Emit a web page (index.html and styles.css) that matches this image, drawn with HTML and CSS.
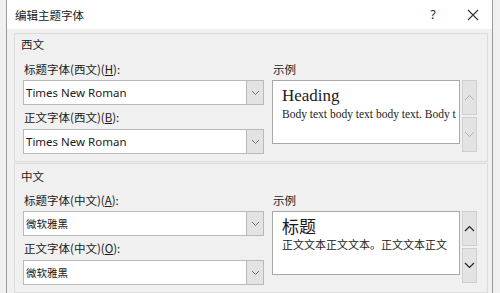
FILE: index.html
```html
<!DOCTYPE html>
<html lang="zh">
  <head>
    <meta charset="UTF-8" />
    <meta name="viewport" content="width=device-width, initial-scale=1.0" />
    <title>编辑主题字体</title>
    <link rel="stylesheet" href="styles.css">
  </head>
  <body>
    <div class="dialog">
      <div class="titleBar">
        <span class="title">编辑主题字体</span>
        <span class="help">?</span>
        <span class="close">
          <svg width="12" height="12" viewBox="0 0 12 12">
            <path d="M1 1 L11 11 M11 1 L1 11" stroke="#333" stroke-width="1.1" fill="none" />
          </svg>
        </span>
      </div>
      <div class="content">
        <div class="group">
          <div class="groupHead">西文</div>
          <div class="groupBody">
            <div class="fields">
              <div class="label">标题字体(西文)(<u>H</u>):</div>
              <div class="combo">
                <div class="comboText latin">Times New Roman</div>
                <div class="comboDrop">
                  <svg width="9" height="6" viewBox="0 0 9 6"><path d="M1 1 L4.5 4.5 L8 1" stroke="#707070" fill="none" /></svg>
                </div>
              </div>
              <div class="label gapTop">正文字体(西文)(<u>B</u>):</div>
              <div class="combo">
                <div class="comboText latin">Times New Roman</div>
                <div class="comboDrop">
                  <svg width="9" height="6" viewBox="0 0 9 6"><path d="M1 1 L4.5 4.5 L8 1" stroke="#707070" fill="none" /></svg>
                </div>
              </div>
            </div>
            <div class="sample">
              <div class="label">示例</div>
              <div class="sampleRow">
                <div class="preview">
                  <div class="headLatin">Heading</div>
                  <div class="bodyLatin">Body text body text body text. Body t</div>
                </div>
                <div class="scroller">
                  <div class="scrollBtn">
                    <svg width="11" height="7" viewBox="0 0 11 7"><path d="M1 6 L5.5 1.5 L10 6" stroke="#b0b0b0" fill="none" /></svg>
                  </div>
                  <div class="scrollBtn">
                    <svg width="11" height="7" viewBox="0 0 11 7"><path d="M1 1 L5.5 5.5 L10 1" stroke="#b0b0b0" fill="none" /></svg>
                  </div>
                </div>
              </div>
            </div>
          </div>
        </div>
        <div class="group second">
          <div class="groupHead">中文</div>
          <div class="groupBody">
            <div class="fields">
              <div class="label">标题字体(中文)(<u>A</u>):</div>
              <div class="combo">
                <div class="comboText cjk">微软雅黑</div>
                <div class="comboDrop">
                  <svg width="9" height="6" viewBox="0 0 9 6"><path d="M1 1 L4.5 4.5 L8 1" stroke="#707070" fill="none" /></svg>
                </div>
              </div>
              <div class="label gapTop">正文字体(中文)(<u>O</u>):</div>
              <div class="combo">
                <div class="comboText cjk">微软雅黑</div>
                <div class="comboDrop">
                  <svg width="9" height="6" viewBox="0 0 9 6"><path d="M1 1 L4.5 4.5 L8 1" stroke="#707070" fill="none" /></svg>
                </div>
              </div>
            </div>
            <div class="sample">
              <div class="label">示例</div>
              <div class="sampleRow">
                <div class="preview">
                  <div class="headCjk">标题</div>
                  <div class="bodyCjk">正文文本正文文本。正文文本正文</div>
                </div>
                <div class="scroller">
                  <div class="scrollBtn">
                    <svg width="11" height="7" viewBox="0 0 11 7"><path d="M1 6 L5.5 1.5 L10 6" stroke="#222" stroke-width="1.2" fill="none" /></svg>
                  </div>
                  <div class="scrollBtn">
                    <svg width="11" height="7" viewBox="0 0 11 7"><path d="M1 1 L5.5 5.5 L10 1" stroke="#222" stroke-width="1.2" fill="none" /></svg>
                  </div>
                </div>
              </div>
            </div>
          </div>
        </div>
      </div>
    </div>
  </body>
</html>
```

FILE: styles.css
```css
body {
  margin: 0;
  background-color: #f0f0f0;
  font-family: "Noto Sans CJK SC", "Noto Sans", sans-serif;
  color: #1a1a1a;
  overflow: hidden;
}

.dialog {
  margin-left: 6px;
  width: 485px;
  height: 293px;
  border-left: 1px solid #9a9a9a;
  border-right: 1px solid #9a9a9a;
  background-color: #f0f0f0;
}

.titleBar {
  height: 29px;
  background-color: white;
  display: flex;
  align-items: center;
}
.title {
  font-size: 11.5px;
  padding-left: 8px;
  flex: 1;
}
.help {
  font-family: "Noto Sans", sans-serif;
  font-size: 12px;
  width: 20px;
  text-align: center;
  margin-right: 24px;
}
.close {
  display: flex;
  width: 12px;
  margin-right: 13px;
}

.content {
  padding: 4px 4px 0 7px;
}

.group {
  border: 1px solid #dcdcdc;
  padding: 0 10px 7px 8px;
}
.group.second {
  margin-top: 1px;
}
.groupHead {
  font-size: 11.5px;
  height: 21px;
  line-height: 21px;
  margin-left: -2px;
}
.group.second .groupHead {
  height: 22px;
  line-height: 24px;
}

.groupBody {
  display: grid;
  grid-template-columns: 241px minmax(0, 1fr);
  column-gap: 8px;
}

.label {
  font-size: 11.5px;
  line-height: 16px;
  padding-top: 6px;
  margin-bottom: 3px;
  padding-left: 1px;
}
.label.gapTop {
  padding-top: 4px;
  margin-bottom: 4px;
}

.combo {
  display: flex;
  height: 25px;
}
.comboText {
  flex: 1;
  background-color: white;
  border: 1px solid #b9b9b9;
  border-right: none;
  padding-left: 2px;
  line-height: 23px;
}
.comboText.latin {
  font-family: "Noto Sans", sans-serif;
  font-size: 11.5px;
}
.comboText.cjk {
  font-size: 10.5px;
}
.comboDrop {
  width: 16px;
  background-color: #e3e3e3;
  border: 1px solid #b9b9b9;
  display: flex;
  align-items: center;
  justify-content: center;
}

.sampleRow {
  display: flex;
  gap: 2px;
  align-items: flex-start;
}
.preview {
  flex: 1;
  min-width: 0;
  height: 64px;
  box-sizing: border-box;
  background-color: white;
  border: 1px solid #a8a8a8;
  padding: 5px 0 0 9px;
  white-space: nowrap;
}
.headLatin {
  font-family: "Liberation Serif", serif;
  font-size: 17px;
  line-height: 20px;
}
.bodyLatin {
  font-family: "Liberation Serif", serif;
  font-size: 11.5px;
  line-height: 16px;
}
.headCjk {
  font-size: 17px;
  line-height: 20px;
  margin-top: -1px;
}
.bodyCjk {
  font-size: 11px;
  line-height: 16px;
}

.scroller {
  width: 15px;
  flex: none;
  display: flex;
  flex-direction: column;
  gap: 2px;
}
.scrollBtn {
  height: 35px;
  box-sizing: border-box;
  background-color: #e3e3e3;
  border: 1px solid #cfcfcf;
  display: flex;
  align-items: center;
  justify-content: center;
}
```
